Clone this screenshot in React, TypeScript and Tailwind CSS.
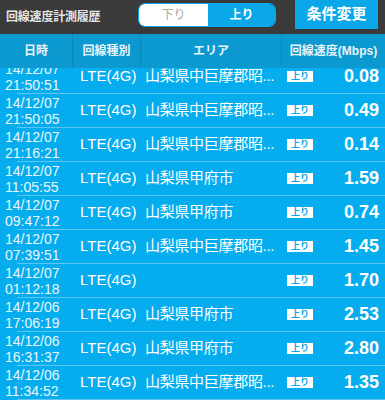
import React from 'react';

type Row = { date: string; time: string; area: string; speed: string };

const SHOWA = '山梨県中巨摩郡昭...';
const KOFU = '山梨県甲府市';

const rows: Row[] = [
  { date: '14/12/07', time: '21:50:51', area: SHOWA, speed: '0.08' },
  { date: '14/12/07', time: '21:50:05', area: SHOWA, speed: '0.49' },
  { date: '14/12/07', time: '21:16:21', area: SHOWA, speed: '0.14' },
  { date: '14/12/07', time: '11:05:55', area: KOFU, speed: '1.59' },
  { date: '14/12/07', time: '09:47:12', area: KOFU, speed: '0.74' },
  { date: '14/12/07', time: '07:39:51', area: SHOWA, speed: '1.45' },
  { date: '14/12/07', time: '01:12:18', area: '', speed: '1.70' },
  { date: '14/12/06', time: '17:06:19', area: KOFU, speed: '2.53' },
  { date: '14/12/06', time: '16:31:37', area: KOFU, speed: '2.80' },
  { date: '14/12/06', time: '11:34:52', area: SHOWA, speed: '1.35' },
];

const font = { fontFamily: '"Liberation Sans", "Noto Sans CJK JP", sans-serif' };

export default function App() {
  return (
    <div className="w-[385px] h-[400px] overflow-hidden flex flex-col bg-[#06adee]" style={font}>
      {/* Top bar */}
      <div className="h-[34px] flex-none flex items-center bg-[#3a3a3a]">
        <div className="w-[138px] pl-[6px] text-[12px] font-bold text-[#e6e6e6] tracking-[-0.2px]">
          回線速度計測履歴
        </div>
        <div className="self-start mt-[3px] w-[138px] h-[24px] flex rounded-[7px] border border-[#0aa8e8] overflow-hidden">
          <div className="w-[69px] bg-white flex items-center justify-center text-[12px] text-[#a8a8a8]">下り</div>
          <div className="flex-1 bg-[#0aa8e8] flex items-center justify-center text-[12px] font-bold text-white">上り</div>
        </div>
        <button className="self-start ml-auto mr-[7px] w-[83px] h-[29px] bg-[#0aa8e8] text-white text-[15px] font-bold flex items-center justify-center">
          条件変更
        </button>
      </div>

      {/* Table header */}
      <div className="h-[34px] flex-none grid grid-cols-[73px_68px_141px_1fr] bg-[#0b99cf] text-[12px] font-bold text-[#e8f4fa]">
        <div className="flex items-center justify-center border-r border-[#0a88bb]">日時</div>
        <div className="flex items-center justify-center border-r border-[#0a88bb]">回線種別</div>
        <div className="flex items-center justify-center border-r border-[#0a88bb]">エリア</div>
        <div className="flex items-center justify-center">回線速度(Mbps)</div>
      </div>

      {/* List */}
      <div className="flex-1 overflow-hidden">
        <div className="-mt-[8px]">
          {rows.map((r, i) => (
            <div key={i}>
              <div className="h-[33px] grid grid-cols-[73px_68px_141px_1fr] items-center text-white">
                <div className="pl-[5px] text-[14px] leading-[16px] text-[#eaf7fd]">
                  <div>{r.date}</div>
                  <div>{r.time}</div>
                </div>
                <div className="pl-[7px] text-[15px]">LTE(4G)</div>
                <div className="pl-[4px] whitespace-nowrap text-[15px] tracking-[-0.3px]">{r.area}</div>
                <div className="flex items-center pl-[5px] pr-[6px]">
                  <span className="w-[26px] h-[11px] bg-white text-[#0aa8e8] text-[9px] font-bold leading-[11px] text-center">
                    上り
                  </span>
                  <span className="ml-auto text-[18px] font-bold">{r.speed}</span>
                </div>
              </div>
              <div className="ml-[17px] h-px bg-[#5cc6f1]" />
            </div>
          ))}
        </div>
      </div>
    </div>
  );
}
